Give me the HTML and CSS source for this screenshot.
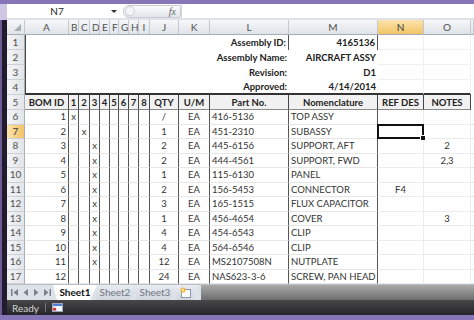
FILE: index.html
```html
<!DOCTYPE html>
<html lang="en">
<head>
  <meta charset="UTF-8">
  <meta name="viewport" content="width=device-width, initial-scale=1.0">
  <title>Aircraft Assy - Bill of Materials</title>
  <link rel="stylesheet" href="styles.css">
</head>
<body>
  <div class="window">
    <!-- Name box and formula bar -->
    <div class="formula-bar">
      <div class="name-box">N7</div>
      <span class="name-arrow"></span>
      <div class="fx-pill">
        <span class="grip"></span>
        <span class="fx">fx</span>
      </div>
      <div class="formula-input"></div>
    </div>

    <div class="sheet">
      <table class="grid">
        <colgroup>
          <col class="w-rh"><col class="w-a">
          <col class="w-10"><col class="w-11"><col class="w-10"><col class="w-10">
          <col class="w-9"><col class="w-10"><col class="w-10"><col class="w-11">
          <col class="w-j"><col class="w-k"><col class="w-l"><col class="w-m">
          <col class="w-n"><col class="w-o"><col>
        </colgroup>
        <thead>
          <tr>
            <th class="corner"><span class="corner-mark"></span></th>
            <th>A</th><th>B</th><th>C</th><th>D</th><th>E</th><th>F</th><th>G</th><th>H</th><th>I</th>
            <th>J</th><th>K</th><th>L</th><th>M</th><th class="active">N</th><th>O</th><th></th>
          </tr>
        </thead>
        <tbody>
          <!-- Assembly info block -->
          <tr class="info">
            <th class="rh">1</th>
            <td class="block" colspan="11" rowspan="4"></td>
            <td class="lbl edge">Assembly ID:</td>
            <td class="val edge">4165136</td>
            <td class="blank"></td><td class="blank"></td><td class="spare"></td>
          </tr>
          <tr class="info">
            <th class="rh">2</th>
            <td class="lbl">Assembly Name:</td>
            <td class="val">AIRCRAFT ASSY</td>
            <td class="blank"></td><td class="blank"></td><td class="spare"></td>
          </tr>
          <tr class="info">
            <th class="rh">3</th>
            <td class="lbl">Revision:</td>
            <td class="val">D1</td>
            <td class="blank"></td><td class="blank"></td><td class="spare"></td>
          </tr>
          <tr class="info last">
            <th class="rh">4</th>
            <td class="lbl">Approved:</td>
            <td class="val">4/14/2014</td>
            <td class="blank"></td><td class="blank"></td><td class="spare"></td>
          </tr>

          <!-- Column titles -->
          <tr class="head">
            <th class="rh">5</th>
            <td>BOM ID</td><td>1</td><td>2</td><td>3</td><td>4</td><td>5</td><td>6</td><td>7</td><td>8</td>
            <td>QTY</td><td>U/M</td><td>Part No.</td><td>Nomenclature</td>
            <td>REF DES</td><td>NOTES</td><td class="spare"></td>
          </tr>

          <!-- Parts -->
          <tr class="item">
            <th class="rh">6</th>
            <td>1</td><td>x</td><td></td><td></td><td></td><td></td><td></td><td></td><td></td>
            <td>/</td><td>EA</td><td>416-5136</td><td>TOP ASSY</td><td></td><td></td><td class="spare"></td>
          </tr>
          <tr class="item">
            <th class="rh active">7</th>
            <td>2</td><td></td><td>x</td><td></td><td></td><td></td><td></td><td></td><td></td>
            <td>1</td><td>EA</td><td>451-2310</td><td>SUBASSY</td><td class="selected"></td><td></td><td class="spare"></td>
          </tr>
          <tr class="item">
            <th class="rh">8</th>
            <td>3</td><td></td><td></td><td>x</td><td></td><td></td><td></td><td></td><td></td>
            <td>2</td><td>EA</td><td>445-6156</td><td>SUPPORT, AFT</td><td></td><td>2</td><td class="spare"></td>
          </tr>
          <tr class="item">
            <th class="rh">9</th>
            <td>4</td><td></td><td></td><td>x</td><td></td><td></td><td></td><td></td><td></td>
            <td>2</td><td>EA</td><td>444-4561</td><td>SUPPORT, FWD</td><td></td><td>2,3</td><td class="spare"></td>
          </tr>
          <tr class="item">
            <th class="rh">10</th>
            <td>5</td><td></td><td></td><td>x</td><td></td><td></td><td></td><td></td><td></td>
            <td>1</td><td>EA</td><td>115-6130</td><td>PANEL</td><td></td><td></td><td class="spare"></td>
          </tr>
          <tr class="item">
            <th class="rh">11</th>
            <td>6</td><td></td><td></td><td>x</td><td></td><td></td><td></td><td></td><td></td>
            <td>2</td><td>EA</td><td>156-5453</td><td>CONNECTOR</td><td>F4</td><td></td><td class="spare"></td>
          </tr>
          <tr class="item">
            <th class="rh">12</th>
            <td>7</td><td></td><td></td><td>x</td><td></td><td></td><td></td><td></td><td></td>
            <td>3</td><td>EA</td><td>165-1515</td><td>FLUX CAPACITOR</td><td></td><td></td><td class="spare"></td>
          </tr>
          <tr class="item">
            <th class="rh">13</th>
            <td>8</td><td></td><td></td><td>x</td><td></td><td></td><td></td><td></td><td></td>
            <td>1</td><td>EA</td><td>456-4654</td><td>COVER</td><td></td><td>3</td><td class="spare"></td>
          </tr>
          <tr class="item">
            <th class="rh">14</th>
            <td>9</td><td></td><td></td><td>x</td><td></td><td></td><td></td><td></td><td></td>
            <td>4</td><td>EA</td><td>454-6543</td><td>CLIP</td><td></td><td></td><td class="spare"></td>
          </tr>
          <tr class="item">
            <th class="rh">15</th>
            <td>10</td><td></td><td></td><td>x</td><td></td><td></td><td></td><td></td><td></td>
            <td>4</td><td>EA</td><td>564-6546</td><td>CLIP</td><td></td><td></td><td class="spare"></td>
          </tr>
          <tr class="item">
            <th class="rh">16</th>
            <td>11</td><td></td><td></td><td>x</td><td></td><td></td><td></td><td></td><td></td>
            <td>12</td><td>EA</td><td>MS2107508N</td><td>NUTPLATE</td><td></td><td></td><td class="spare"></td>
          </tr>
          <tr class="item">
            <th class="rh">17</th>
            <td>12</td><td></td><td></td><td></td><td></td><td></td><td></td><td></td><td></td>
            <td>24</td><td>EA</td><td>NAS623-3-6</td><td>SCREW, PAN HEAD</td><td></td><td></td><td class="spare"></td>
          </tr>
        </tbody>
      </table>
    </div>

    <!-- Sheet tabs -->
    <div class="tabs">
      <div class="tab-nav">
        <svg width="8" height="7" viewBox="0 0 8 7"><rect x="0" y="0" width="1.5" height="7" fill="#7a808a"/><path d="M7 0 L2.5 3.5 L7 7 Z" fill="#7a808a"/></svg>
        <svg width="6" height="7" viewBox="0 0 6 7"><path d="M5 0 L0.5 3.5 L5 7 Z" fill="#7a808a"/></svg>
        <svg width="6" height="7" viewBox="0 0 6 7"><path d="M1 0 L5.5 3.5 L1 7 Z" fill="#7a808a"/></svg>
        <svg width="8" height="7" viewBox="0 0 8 7"><path d="M1 0 L5.5 3.5 L1 7 Z" fill="#7a808a"/><rect x="6.5" y="0" width="1.5" height="7" fill="#7a808a"/></svg>
      </div>
      <div class="tab current">Sheet1</div>
      <div class="tab">Sheet2</div>
      <div class="tab">Sheet3</div>
      <div class="tab add">
        <svg width="14" height="11" viewBox="0 0 14 11">
          <rect x="2.5" y="2.5" width="9" height="8" fill="#fff" stroke="#8d96a6"/>
          <circle cx="4" cy="3" r="2.6" fill="#f3b23c"/>
          <circle cx="4" cy="3" r="1.2" fill="#fde7a8"/>
        </svg>
      </div>
      <div class="scroll-area"></div>
    </div>

    <!-- Status bar -->
    <div class="status">
      <span class="ready">Ready</span>
      <span class="status-sep"></span>
      <svg class="macro" width="11" height="9" viewBox="0 0 11 9">
        <rect x="0.5" y="0.5" width="10" height="8" fill="#f4f6fa" stroke="#9aa6c0"/>
        <rect x="1" y="1" width="9" height="2" fill="#4f7fd0"/>
        <circle cx="2.6" cy="6.2" r="1.6" fill="#d9302c"/>
      </svg>
    </div>
  </div>
</body>
</html>
```

FILE: styles.css
```css
/* Page frame */
body {
  margin: 0;
  height: 320px;
  overflow: hidden;
  font-family: Lato, "Liberation Sans", sans-serif;
  background:
    linear-gradient(90deg, #6b5c94 0 2px, #211b2d 2px 7px) 0 20px / 7px 295px no-repeat,
    linear-gradient(90deg, #cfc8e4 0 7px) 0 4px / 7px 16px no-repeat,
    #8676b8;
}

.window {
  margin: 4px 0 0 7px;
  width: 467px;
  height: 311px;
  background: #fff;
  display: flex;
  flex-direction: column;
}

/* Formula bar */
.formula-bar {
  height: 14px;
  display: flex;
  align-items: center;
  border-bottom: 2px solid #dfe3e9;
  flex: none;
}

.name-box {
  width: 100px;
  text-align: center;
  font-size: 10px;
  color: #222;
}

.name-arrow {
  width: 0;
  height: 0;
  margin-left: 4px;
  border-left: 3px solid transparent;
  border-right: 3px solid transparent;
  border-top: 3px solid #333;
}

.fx-pill {
  width: 56px;
  height: 11px;
  margin-left: 6px;
  border: 1px solid #c6cad1;
  border-radius: 6px 2px 2px 6px;
  background: linear-gradient(#fbfcfd, #e2e5ea);
  display: flex;
  align-items: center;
  justify-content: space-between;
}

.grip {
  width: 8px;
  height: 8px;
  margin-left: 1px;
  border-radius: 50%;
  border: 1px solid #cfd3da;
  background: #f4f5f7;
}

.fx {
  font-family: "Liberation Serif", serif;
  font-style: italic;
  font-size: 10px;
  color: #666;
  padding-right: 4px;
}

.formula-input {
  flex: 1;
  height: 14px;
  border-left: 1px solid #d3d7de;
}

/* Grid */
.sheet {
  height: 264px;
  overflow: hidden;
  flex: none;
}

.grid {
  table-layout: fixed;
  width: 467px;
  border-collapse: separate;
  border-spacing: 0;
  font-size: 9.5px;
  color: #222;
}

.w-rh { width: 18px; }
.w-a { width: 44px; }
.w-9 { width: 9px; }
.w-10 { width: 10px; }
.w-11 { width: 11px; }
.w-j { width: 29px; }
.w-k { width: 31px; }
.w-l { width: 79px; }
.w-m { width: 89px; }
.w-n { width: 46px; }
.w-o { width: 47px; }

.grid td,
.grid th {
  padding: 0 2px;
  line-height: 11px;
  white-space: nowrap;
  overflow: hidden;
}

.grid thead th {
  height: 14px;
  font-weight: normal;
  font-size: 10px;
  color: #505050;
  background: linear-gradient(#f6f7f9, #dfe2e7);
  border-right: 1px solid #c4c8ce;
  border-bottom: 1px solid #a7adb6;
  text-align: center;
}

.grid thead th.active {
  background: linear-gradient(#fbe3ae, #f2c466);
  color: #3a3a3a;
}

.corner {
  position: relative;
}

.corner-mark {
  position: absolute;
  right: 3px;
  bottom: 3px;
  width: 0;
  height: 0;
  border-left: 7px solid transparent;
  border-bottom: 7px solid #a9aeb6;
}

.grid .rh {
  font-weight: normal;
  font-size: 10px;
  color: #505050;
  background: linear-gradient(90deg, #f3f4f6, #e2e5e9);
  border-right: 1px solid #a7adb6;
  border-bottom: 1px solid #cdd1d6;
  text-align: center;
  padding: 0;
}

.grid .rh.active {
  background: linear-gradient(90deg, #fbe3ae, #f2c466);
  color: #3a3a3a;
}

/* Rows 1-4: assembly info */
.info {
  height: 15px;
}

.info td {
  font-weight: bold;
  text-align: right;
  padding: 0 2px 0 0;
}

.block {
  border-left: 1px solid #4a4a4a;
  border-bottom: 2px solid #333;
}

.info .edge {
  border-right: 1px solid #555;
}

.info .blank {
  border-right: 1px solid #f0f0f0;
  border-bottom: 1px solid #f0f0f0;
}

.info.last td {
  border-bottom: 2px solid #333;
}

.info.last td.spare {
  border-bottom: none;
}

/* Row 5: column titles */
.head {
  height: 15px;
}

.head td {
  font-weight: bold;
  text-align: center;
  background: #f1f1f1;
  border-right: 1px solid #454545;
  border-bottom: 1px solid #8a8a8a;
  padding: 0;
}

.head td.spare {
  background: none;
  border: none;
}

/* Rows 6-17: parts */
.item {
  height: 14.5px;
}

.item td {
  text-align: center;
  color: #333;
  border-right: 1px solid #555;
  border-bottom: 1px solid #e6e6e6;
}

.item td:nth-child(2) {
  text-align: right;
}

.item td:nth-child(13),
.item td:nth-child(14) {
  text-align: left;
}

.item td:nth-child(15),
.item td:nth-child(16) {
  border-right-color: #ececec;
  border-bottom-color: #ececec;
}

.grid td.spare {
  border-right: none;
}

.item td.selected {
  position: relative;
  overflow: visible;
}

.selected::after {
  content: '';
  position: absolute;
  left: -1px;
  top: -1px;
  right: -1px;
  bottom: -1px;
  border: 2px solid #111;
}

.selected::before {
  content: '';
  position: absolute;
  right: -3px;
  bottom: -3px;
  width: 4px;
  height: 4px;
  background: #111;
  border: 1px solid #fff;
  z-index: 1;
}

/* Sheet tabs */
.tabs {
  height: 16px;
  flex: none;
  display: flex;
  align-items: stretch;
  background: #dde1e8;
  border-top: 1px solid #b9bfc9;
  box-sizing: border-box;
}

.tab-nav {
  width: 44px;
  display: flex;
  align-items: center;
  justify-content: space-around;
  padding-left: 2px;
}

.tab {
  width: 44px;
  margin-left: -4px;
  font-size: 10px;
  line-height: 14px;
  text-align: center;
  color: #6f7684;
  background: linear-gradient(#e9ecf1, #cfd5de);
  clip-path: polygon(0 0, 100% 0, calc(100% - 7px) 100%, 4px 100%);
}

.tab.current {
  margin-left: 0;
  color: #111;
  font-weight: bold;
  background: #fff;
  z-index: 1;
}

.tab.add {
  width: 26px;
  display: flex;
  align-items: center;
  justify-content: center;
}

.scroll-area {
  flex: 1;
  margin-left: 2px;
  background: linear-gradient(#a9a9a9, #6e6e6e);
}

/* Status bar */
.status {
  height: 15px;
  flex: none;
  display: flex;
  align-items: center;
  background: linear-gradient(#474749, #262628);
}

.ready {
  font-size: 10px;
  color: #d4d4d4;
  margin-left: 5px;
}

.status-sep {
  width: 1px;
  height: 9px;
  margin: 0 6px;
  background: #777;
}
```
